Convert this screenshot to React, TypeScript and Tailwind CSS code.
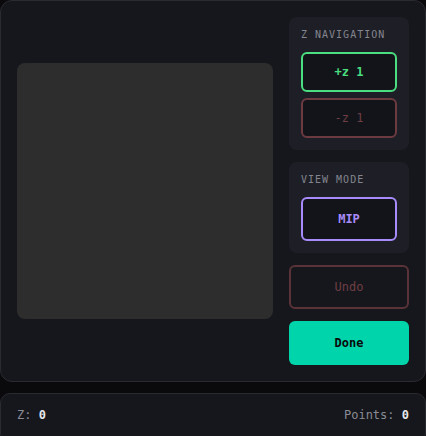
import React from "react";

export default function App() {
  const mono = { fontFamily: '"DejaVu Sans Mono", "Liberation Mono", monospace' };
  return (
    <div className="w-[426px] h-[436px] bg-[#0a0a0c] overflow-hidden" style={mono}>
      <div className="h-[382px] rounded-[12px] border border-[#2a2b31] bg-[#16171c] flex items-center pl-[16px] pr-[16px] gap-[16px]">
        <div className="w-[256px] h-[256px] rounded-[8px] bg-[#2d2d2d] shrink-0" />
        <div className="w-[120px] flex flex-col gap-[12px]">
          <div className="rounded-[8px] bg-[#1e1f26] p-[12px] flex flex-col">
            <div className="text-[10px] leading-[12px] tracking-[0.1em] text-[#84858f] mb-[11px]">Z NAVIGATION</div>
            <button className="h-[40px] rounded-[6px] border-2 border-[#4ade80] bg-[#131419] text-[12px] text-[#4ade80] font-bold">+z 1</button>
            <button className="mt-[6px] h-[40px] rounded-[6px] border-2 border-[#6b3b40] bg-[#131419] text-[12px] text-[#6e3f44]">-z 1</button>
          </div>
          <div className="rounded-[8px] bg-[#1e1f26] p-[12px] flex flex-col">
            <div className="text-[10px] leading-[12px] tracking-[0.1em] text-[#84858f] mb-[11px]">VIEW MODE</div>
            <button className="h-[44px] rounded-[6px] border-2 border-[#a78bfa] bg-[#131419] text-[12px] text-[#a78bfa] font-bold">MIP</button>
          </div>
          <button className="h-[44px] rounded-[6px] border-2 border-[#5a3338] bg-transparent text-[12px] text-[#6e3f44]">Undo</button>
          <button className="h-[44px] rounded-[6px] bg-[#00d4aa] text-[12px] text-[#0a0a0a] font-bold">Done</button>
        </div>
      </div>
      <div className="mt-[11px] h-[50px] rounded-[10px] border border-[#2a2b31] bg-[#16171c] flex items-start justify-between px-[16px] pt-[12px] text-[12px] leading-[18px]">
        <div><span className="text-[#8a8b95]">Z: </span><span className="text-[#e5e7eb] font-bold">0</span></div>
        <div><span className="text-[#8a8b95]">Points: </span><span className="text-[#e5e7eb] font-bold">0</span></div>
      </div>
    </div>
  );
}
